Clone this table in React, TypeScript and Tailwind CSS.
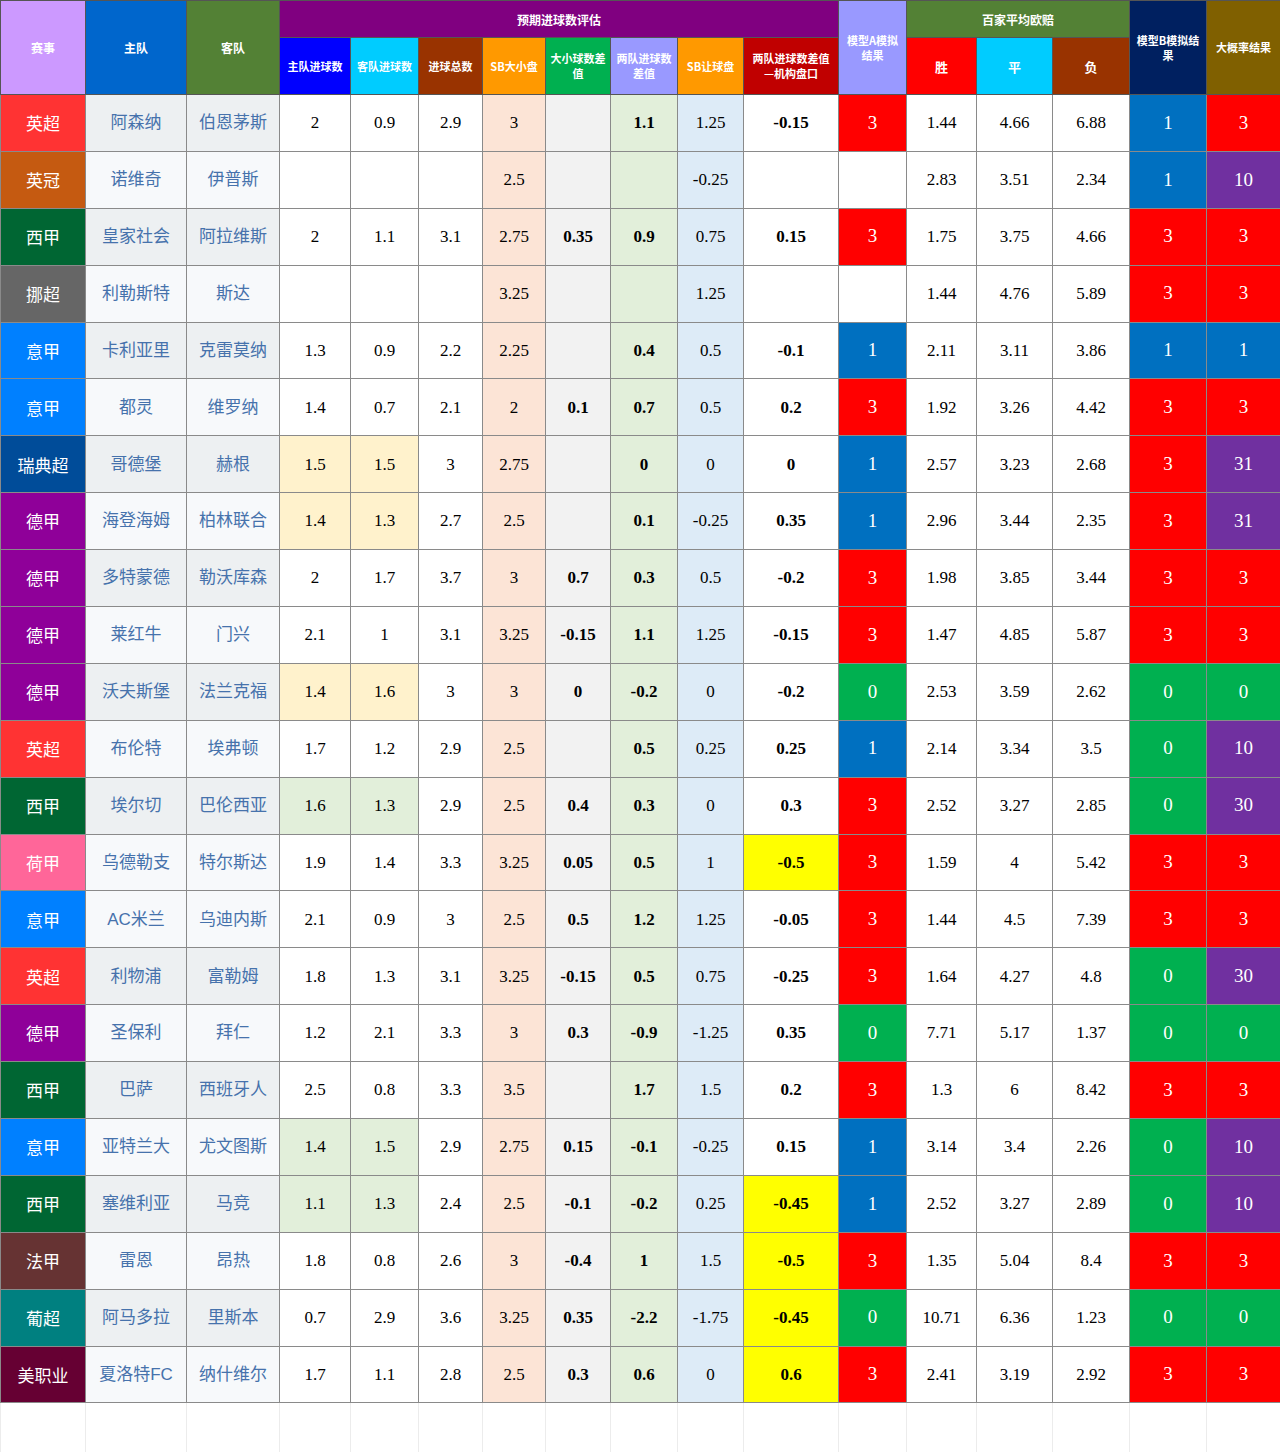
import React from "react";

type Row = {
  lg: string;
  home: string;
  away: string;
  v: string[]; // h, a, total, sbOU, ouDiff, diff, sbHc, inst
  mA: string;
  odds: string[];
  mB: string;
  big: string;
  hl?: "y" | "g";
  yel?: boolean;
  gray?: boolean;
};

const rows: Row[] = [
  { lg: "英超", home: "阿森纳", away: "伯恩茅斯", v: ["2", "0.9", "2.9", "3", "", "1.1", "1.25", "-0.15"], mA: "3", odds: ["1.44", "4.66", "6.88"], mB: "1", big: "3", gray: true },
  { lg: "英冠", home: "诺维奇", away: "伊普斯", v: ["", "", "", "2.5", "", "", "-0.25", ""], mA: "", odds: ["2.83", "3.51", "2.34"], mB: "1", big: "10" },
  { lg: "西甲", home: "皇家社会", away: "阿拉维斯", v: ["2", "1.1", "3.1", "2.75", "0.35", "0.9", "0.75", "0.15"], mA: "3", odds: ["1.75", "3.75", "4.66"], mB: "3", big: "3", gray: true },
  { lg: "挪超", home: "利勒斯特", away: "斯达", v: ["", "", "", "3.25", "", "", "1.25", ""], mA: "", odds: ["1.44", "4.76", "5.89"], mB: "3", big: "3" },
  { lg: "意甲", home: "卡利亚里", away: "克雷莫纳", v: ["1.3", "0.9", "2.2", "2.25", "", "0.4", "0.5", "-0.1"], mA: "1", odds: ["2.11", "3.11", "3.86"], mB: "1", big: "1", gray: true },
  { lg: "意甲", home: "都灵", away: "维罗纳", v: ["1.4", "0.7", "2.1", "2", "0.1", "0.7", "0.5", "0.2"], mA: "3", odds: ["1.92", "3.26", "4.42"], mB: "3", big: "3" },
  { lg: "瑞典超", home: "哥德堡", away: "赫根", v: ["1.5", "1.5", "3", "2.75", "", "0", "0", "0"], mA: "1", odds: ["2.57", "3.23", "2.68"], mB: "3", big: "31", hl: "y", gray: true },
  { lg: "德甲", home: "海登海姆", away: "柏林联合", v: ["1.4", "1.3", "2.7", "2.5", "", "0.1", "-0.25", "0.35"], mA: "1", odds: ["2.96", "3.44", "2.35"], mB: "3", big: "31", hl: "y" },
  { lg: "德甲", home: "多特蒙德", away: "勒沃库森", v: ["2", "1.7", "3.7", "3", "0.7", "0.3", "0.5", "-0.2"], mA: "3", odds: ["1.98", "3.85", "3.44"], mB: "3", big: "3", gray: true },
  { lg: "德甲", home: "莱红牛", away: "门兴", v: ["2.1", "1", "3.1", "3.25", "-0.15", "1.1", "1.25", "-0.15"], mA: "3", odds: ["1.47", "4.85", "5.87"], mB: "3", big: "3" },
  { lg: "德甲", home: "沃夫斯堡", away: "法兰克福", v: ["1.4", "1.6", "3", "3", "0", "-0.2", "0", "-0.2"], mA: "0", odds: ["2.53", "3.59", "2.62"], mB: "0", big: "0", hl: "y", gray: true },
  { lg: "英超", home: "布伦特", away: "埃弗顿", v: ["1.7", "1.2", "2.9", "2.5", "", "0.5", "0.25", "0.25"], mA: "1", odds: ["2.14", "3.34", "3.5"], mB: "0", big: "10" },
  { lg: "西甲", home: "埃尔切", away: "巴伦西亚", v: ["1.6", "1.3", "2.9", "2.5", "0.4", "0.3", "0", "0.3"], mA: "3", odds: ["2.52", "3.27", "2.85"], mB: "0", big: "30", hl: "g", gray: true },
  { lg: "荷甲", home: "乌德勒支", away: "特尔斯达", v: ["1.9", "1.4", "3.3", "3.25", "0.05", "0.5", "1", "-0.5"], mA: "3", odds: ["1.59", "4", "5.42"], mB: "3", big: "3", yel: true },
  { lg: "意甲", home: "AC米兰", away: "乌迪内斯", v: ["2.1", "0.9", "3", "2.5", "0.5", "1.2", "1.25", "-0.05"], mA: "3", odds: ["1.44", "4.5", "7.39"], mB: "3", big: "3" },
  { lg: "英超", home: "利物浦", away: "富勒姆", v: ["1.8", "1.3", "3.1", "3.25", "-0.15", "0.5", "0.75", "-0.25"], mA: "3", odds: ["1.64", "4.27", "4.8"], mB: "0", big: "30", gray: true },
  { lg: "德甲", home: "圣保利", away: "拜仁", v: ["1.2", "2.1", "3.3", "3", "0.3", "-0.9", "-1.25", "0.35"], mA: "0", odds: ["7.71", "5.17", "1.37"], mB: "0", big: "0" },
  { lg: "西甲", home: "巴萨", away: "西班牙人", v: ["2.5", "0.8", "3.3", "3.5", "", "1.7", "1.5", "0.2"], mA: "3", odds: ["1.3", "6", "8.42"], mB: "3", big: "3", gray: true },
  { lg: "意甲", home: "亚特兰大", away: "尤文图斯", v: ["1.4", "1.5", "2.9", "2.75", "0.15", "-0.1", "-0.25", "0.15"], mA: "1", odds: ["3.14", "3.4", "2.26"], mB: "0", big: "10", hl: "g" },
  { lg: "西甲", home: "塞维利亚", away: "马竞", v: ["1.1", "1.3", "2.4", "2.5", "-0.1", "-0.2", "0.25", "-0.45"], mA: "1", odds: ["2.52", "3.27", "2.89"], mB: "0", big: "10", hl: "g", yel: true, gray: true },
  { lg: "法甲", home: "雷恩", away: "昂热", v: ["1.8", "0.8", "2.6", "3", "-0.4", "1", "1.5", "-0.5"], mA: "3", odds: ["1.35", "5.04", "8.4"], mB: "3", big: "3", yel: true },
  { lg: "葡超", home: "阿马多拉", away: "里斯本", v: ["0.7", "2.9", "3.6", "3.25", "0.35", "-2.2", "-1.75", "-0.45"], mA: "0", odds: ["10.71", "6.36", "1.23"], mB: "0", big: "0", yel: true, gray: true },
  { lg: "美职业", home: "夏洛特FC", away: "纳什维尔", v: ["1.7", "1.1", "2.8", "2.5", "0.3", "0.6", "0", "0.6"], mA: "3", odds: ["2.41", "3.19", "2.92"], mB: "3", big: "3", yel: true },
];

const widths = [85, 101, 93, 71, 68, 64, 63, 65, 67, 66, 95, 68, 70, 76, 77, 77, 74];

const leagueBg: Record<string, string> = {
  英超: "bg-[#ff3333]",
  英冠: "bg-[#c55a11]",
  西甲: "bg-[#006633]",
  挪超: "bg-[#666666]",
  意甲: "bg-[#0080ff]",
  瑞典超: "bg-[#004c99]",
  德甲: "bg-[#8f0099]",
  荷甲: "bg-[#ff6699]",
  法甲: "bg-[#663333]",
  葡超: "bg-[#008080]",
  美职业: "bg-[#660033]",
};

function resultBg(v: string) {
  if (v === "3") return "bg-[#ff0000]";
  if (v === "1") return "bg-[#0070c0]";
  if (v === "0") return "bg-[#00b050]";
  if (v === "") return "bg-white";
  return "bg-[#7030a0]";
}

const bd = "border border-[#8a8a8a]";
const hd = "border border-[#555] text-white font-bold text-[11px] leading-[15px] text-center align-middle px-1";
const num = "font-['Liberation_Serif',serif] text-[17px] text-black text-center align-middle";
const team = "font-['Liberation_Sans','Noto_Sans_CJK_SC',sans-serif] text-[17px] text-[#4672ac] text-center align-middle";
const res = "font-['Liberation_Serif',serif] text-[19px] text-white text-center align-middle";

export default function App() {
  return (
    <div className="w-[1280px] h-[1452px] bg-white overflow-hidden font-['Noto_Sans_CJK_SC',sans-serif]">
      <table className="table-fixed border-collapse w-[1280px]">
        <colgroup>
          {widths.map((w, i) => (
            <col key={i} style={{ width: w }} />
          ))}
        </colgroup>
        <thead>
          <tr className="h-[37px]">
            <th rowSpan={2} className={`${hd} bg-[#cc99ff] text-[12px]`}>赛事</th>
            <th rowSpan={2} className={`${hd} bg-[#0066cc] text-[12px]`}>主队</th>
            <th rowSpan={2} className={`${hd} bg-[#538135] text-[12px]`}>客队</th>
            <th colSpan={8} className={`${hd} bg-[#800080] text-[12px]`}>预期进球数评估</th>
            <th rowSpan={2} className={`${hd} bg-[#9999ff]`}>
              模型A模拟
              <br />
              结果
            </th>
            <th colSpan={3} className={`${hd} bg-[#538135] text-[12px]`}>百家平均欧赔</th>
            <th rowSpan={2} className={`${hd} bg-[#002060]`}>
              模型B模拟结
              <br />
              果
            </th>
            <th rowSpan={2} className={`${hd} bg-[#806000]`}>大概率结果</th>
          </tr>
          <tr className="h-[57px]">
            <th className={`${hd} bg-[#0000ff]`}>主队进球数</th>
            <th className={`${hd} bg-[#00ccff]`}>客队进球数</th>
            <th className={`${hd} bg-[#993300]`}>进球总数</th>
            <th className={`${hd} bg-[#ff9900]`}>SB大小盘</th>
            <th className={`${hd} bg-[#00b050]`}>
              大小球数差
              <br />
              值
            </th>
            <th className={`${hd} bg-[#9999ff]`}>
              两队进球数
              <br />
              差值
            </th>
            <th className={`${hd} bg-[#ff9900]`}>SB让球盘</th>
            <th className={`${hd} bg-[#c00000]`}>
              两队进球数差值
              <br />
              —机构盘口
            </th>
            <th className={`${hd} bg-[#ff0000] text-[13px]`}>胜</th>
            <th className={`${hd} bg-[#00ccff] text-[13px]`}>平</th>
            <th className={`${hd} bg-[#993300] text-[13px]`}>负</th>
          </tr>
        </thead>
        <tbody>
          {rows.map((r, i) => {
            const teamBg = r.gray ? "bg-[#edf0f2]" : "bg-[#f7f9fb]";
            const hlBg = r.hl === "y" ? "bg-[#fff2cc]" : r.hl === "g" ? "bg-[#e2efda]" : "bg-white";
            return (
              <tr key={i} className="h-[56.9px]">
                <td className={`${bd} ${leagueBg[r.lg]} text-white text-[17px] text-center align-middle`}>{r.lg}</td>
                <td className={`${bd} ${teamBg} ${team}`}>{r.home}</td>
                <td className={`${bd} ${teamBg} ${team}`}>{r.away}</td>
                <td className={`${bd} ${hlBg} ${num}`}>{r.v[0]}</td>
                <td className={`${bd} ${hlBg} ${num}`}>{r.v[1]}</td>
                <td className={`${bd} bg-white ${num}`}>{r.v[2]}</td>
                <td className={`${bd} bg-[#fce4d6] ${num}`}>{r.v[3]}</td>
                <td className={`${bd} bg-[#f2f2f2] ${num} font-bold`}>{r.v[4]}</td>
                <td className={`${bd} bg-[#e2efda] ${num} font-bold`}>{r.v[5]}</td>
                <td className={`${bd} bg-[#ddebf7] ${num}`}>{r.v[6]}</td>
                <td className={`${bd} ${r.yel ? "bg-[#ffff00]" : "bg-white"} ${num} font-bold`}>{r.v[7]}</td>
                <td className={`${bd} ${resultBg(r.mA)} ${res}`}>{r.mA}</td>
                <td className={`${bd} bg-white ${num}`}>{r.odds[0]}</td>
                <td className={`${bd} bg-white ${num}`}>{r.odds[1]}</td>
                <td className={`${bd} bg-white ${num}`}>{r.odds[2]}</td>
                <td className={`${bd} ${resultBg(r.mB)} ${res}`}>{r.mB}</td>
                <td className={`${bd} ${resultBg(r.big)} ${res}`}>{r.big}</td>
              </tr>
            );
          })}
          <tr className="h-[50px]">
            {widths.map((_, i) => (
              <td key={i} className="border-x border-[#ececec] bg-white" />
            ))}
          </tr>
        </tbody>
      </table>
    </div>
  );
}
